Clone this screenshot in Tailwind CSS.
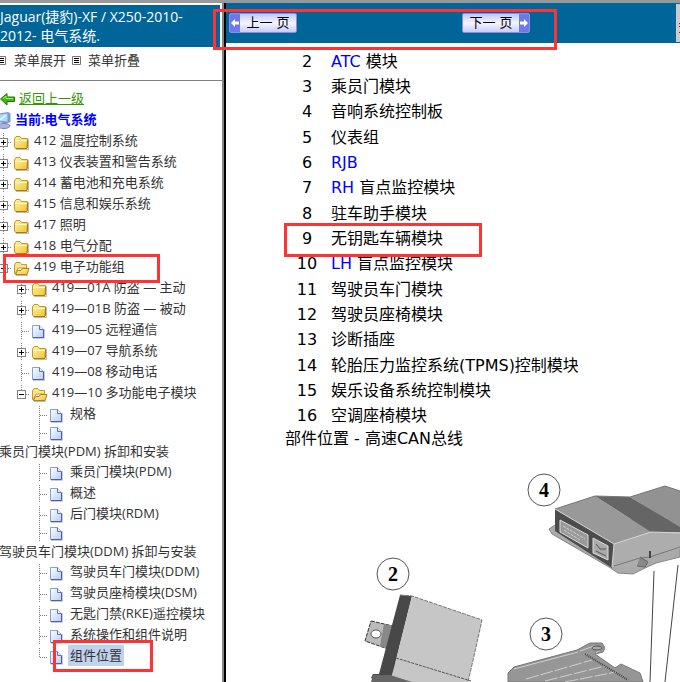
<!DOCTYPE html>
<html lang="zh-CN">
 <head>
  <meta charset="utf-8"/>
  <meta content="width=device-width, initial-scale=1.0" name="viewport"/>
  <title>
    Jaguar(捷豹)-XF 电气系统
  </title>
  <script src="https://cdn.jsdelivr.net/npm/@tailwindcss/browser@4"></script>
 </head>
 <body class="relative flex min-h-screen flex-col overflow-x-hidden bg-white font-['Open_Sans','Noto_Sans_CJK_SC',sans-serif] text-[13px] text-[#333]">
  <!-- Shared tree icons -->
  <svg class="absolute size-0" aria-hidden="true">
   <defs>
    <linearGradient id="gold" x1="0" y1="0" x2="1" y2="1"><stop offset="0" stop-color="#fff3a8"/><stop offset="1" stop-color="#f0c430"/></linearGradient>
    <linearGradient id="sheet" x1="0" y1="0" x2="1" y2="1"><stop offset="0" stop-color="#ffffff"/><stop offset="1" stop-color="#b4cdf5"/></linearGradient>
   </defs>
   <symbol id="plus" viewBox="0 0 18 18">
    <path d="M9.500 0V18M14 9.500H18" fill="none" stroke="#808080" stroke-dasharray="1 1"/>
    <rect x="5.500" y="5.500" width="8" height="8" fill="#fff" stroke="#848484"/>
    <path d="M7 9.500H12M9.500 7V12" stroke="#000"/>
   </symbol>
   <symbol id="minus" viewBox="0 0 18 18">
    <path d="M9.500 0V5M14 9.500H18" fill="none" stroke="#808080" stroke-dasharray="1 1"/>
    <rect x="5.500" y="5.500" width="8" height="8" fill="#fff" stroke="#848484"/>
    <path d="M7 9.500H12" stroke="#000"/>
   </symbol>
   <symbol id="join" viewBox="0 0 18 18">
    <path d="M9.500 0V18M10 9.500H18" fill="none" stroke="#808080" stroke-dasharray="1 1"/>
   </symbol>
   <symbol id="joinend" viewBox="0 0 18 18">
    <path d="M9.500 0V10M10 9.500H18" fill="none" stroke="#808080" stroke-dasharray="1 1"/>
   </symbol>
   <symbol id="folder" viewBox="0 0 18 18">
    <path d="M4 16.500H16.500V6" fill="none" stroke="#bbb"/>
    <path d="M2.500 14V6L4 3.500H8L9.500 5.500H15.500V14.500L14.500 15.500H4Z" fill="url(#gold)" stroke="#c49a2c"/>
    <path d="M3 7.500H15" stroke="#fffbd8"/>
    <path d="M3.500 15.500H15L15.500 7" fill="none" stroke="#a87b10"/>
   </symbol>
   <symbol id="open" viewBox="0 0 18 18">
    <path d="M4 16.500H16" stroke="#bbb"/>
    <path d="M2.500 14V6L4 3.500H8L9.500 5.500H14.500V9H6L3 15Z" fill="#f8e68c" stroke="#c49a2c"/>
    <path d="M3.500 15.500L5.500 11.500H9L10.500 9.500H17L15 15.500Z" fill="url(#gold)" stroke="#b08418"/>
   </symbol>
   <symbol id="doc" viewBox="0 0 18 18">
    <path d="M3 16.500H14.500V7" fill="none" stroke="#ccc"/>
    <path d="M2.500 3.500H9.500L13.500 7.500V15.500H2.500Z" fill="url(#sheet)" stroke="#8a9fd0"/>
    <path d="M9.500 3.500V7.500H13.500" fill="#e8f0ff" stroke="#5872b5"/>
    <path d="M13.500 8V15.500H3" fill="none" stroke="#4a60a8"/>
   </symbol>
   <symbol id="lines" viewBox="0 0 10 10">
    <path d="M.5.5H8.500V8.500H.5Z" fill="#fff" stroke="#777"/>
    <path d="M2 2.500H7M2 4.500H7M2 6.500H7" stroke="#000"/>
   </symbol>
  </svg>

  <div class="h-[3px] bg-[#999]"></div>
  <div class="flex flex-1">
   <aside class="w-[224px] shrink-0 overflow-hidden border-r-2 border-[#848484] whitespace-nowrap">
    <h1 class="mt-[2px] mr-[2px] h-[42px] bg-[#006699] pt-[2px] text-sm leading-[19px] text-white">
     Jaguar(捷豹)-XF / X250-2010-<br/>2012- 电气系统.
    </h1>
    <div class="flex h-[34px] items-center border-b border-[#808080] pb-[6px]">
     <button class="flex items-center">
      <svg class="-ml-[3px] mr-[7px] size-[10px]"><use href="#lines"/></svg>菜单展开
     </button>
     <button class="flex items-center">
      <svg class="mx-[6px] size-[10px]"><use href="#lines"/></svg>菜单折叠
     </button>
    </div>
    <div class="mt-[8px] flex h-[20px] items-center">
     <svg class="mr-[4px] h-[14px] w-[15px]" viewBox="0 0 15 14">
      <path d="M.5 7L7 1.500V5H14.500V9.500H7V13Z" fill="#3db814" stroke="#1d7408"/>
      <path d="M3 6.500L6 4V6.500H13" fill="none" stroke="#a8ec78"/>
     </svg>
     <a class="text-[#339900] underline" href="#">返回上一级</a>
    </div>
    <div class="flex h-[21px] items-center">
     <svg class="mr-[4px] h-[18px] w-[11px]" viewBox="0 0 11 18">
      <path d="M-4 3L8 1L10.500 2.500V11L7 12.500L-4 11Z" fill="#7f9ad0"/>
      <path d="M-4 4L7.500 2.500V10.500L-4 9.500Z" fill="#9fdcff"/>
      <path d="M0 9L6 4" stroke="#dff5ff" stroke-width="2"/>
      <ellipse cx="4" cy="15" rx="6" ry="2.500" fill="#b0b4dc" stroke="#7c80b0"/>
     </svg>
     <span class="font-semibold text-[#0000ff]">当前:电气系统</span>
    </div>

    <nav class="-ml-[6px] leading-[21px]">
     <ul>
      <li class="flex h-[21px] items-end"><button aria-label="展开 412"><svg class="size-[18px]"><use href="#plus"/></svg></button><svg class="mr-[4px] size-[18px]"><use href="#folder"/></svg><a href="#">412 温度控制系统</a></li>
      <li class="flex h-[21px] items-end"><button aria-label="展开 413"><svg class="size-[18px]"><use href="#plus"/></svg></button><svg class="mr-[4px] size-[18px]"><use href="#folder"/></svg><a href="#">413 仪表装置和警告系统</a></li>
      <li class="flex h-[21px] items-end"><button aria-label="展开 414"><svg class="size-[18px]"><use href="#plus"/></svg></button><svg class="mr-[4px] size-[18px]"><use href="#folder"/></svg><a href="#">414 蓄电池和充电系统</a></li>
      <li class="flex h-[21px] items-end"><button aria-label="展开 415"><svg class="size-[18px]"><use href="#plus"/></svg></button><svg class="mr-[4px] size-[18px]"><use href="#folder"/></svg><a href="#">415 信息和娱乐系统</a></li>
      <li class="flex h-[21px] items-end"><button aria-label="展开 417"><svg class="size-[18px]"><use href="#plus"/></svg></button><svg class="mr-[4px] size-[18px]"><use href="#folder"/></svg><a href="#">417 照明</a></li>
      <li class="flex h-[21px] items-end"><button aria-label="展开 418"><svg class="size-[18px]"><use href="#plus"/></svg></button><svg class="mr-[4px] size-[18px]"><use href="#folder"/></svg><a href="#">418 电气分配</a></li>
      <li>
       <div class="flex h-[21px] items-end"><button aria-label="折叠 419"><svg class="size-[18px]"><use href="#minus"/></svg></button><svg class="mr-[4px] size-[18px]"><use href="#open"/></svg><a href="#">419 电子功能组</a></div>
       <ul>
        <li class="flex h-[21px] items-end pl-[18px]"><button aria-label="展开 419-01A"><svg class="size-[18px]"><use href="#plus"/></svg></button><svg class="mr-[4px] size-[18px]"><use href="#folder"/></svg><a href="#">419—01A 防盗 — 主动</a></li>
        <li class="flex h-[21px] items-end pl-[18px]"><button aria-label="展开 419-01B"><svg class="size-[18px]"><use href="#plus"/></svg></button><svg class="mr-[4px] size-[18px]"><use href="#folder"/></svg><a href="#">419—01B 防盗 — 被动</a></li>
        <li class="flex h-[21px] items-end pl-[18px]"><svg class="size-[18px]"><use href="#join"/></svg><svg class="mr-[4px] size-[18px]"><use href="#doc"/></svg><a href="#">419—05 远程通信</a></li>
        <li class="flex h-[21px] items-end pl-[18px]"><button aria-label="展开 419-07"><svg class="size-[18px]"><use href="#plus"/></svg></button><svg class="mr-[4px] size-[18px]"><use href="#folder"/></svg><a href="#">419—07 导航系统</a></li>
        <li class="flex h-[21px] items-end pl-[18px]"><svg class="size-[18px]"><use href="#join"/></svg><svg class="mr-[4px] size-[18px]"><use href="#doc"/></svg><a href="#">419—08 移动电话</a></li>
        <li>
         <div class="flex h-[21px] items-end pl-[18px]"><button aria-label="折叠 419-10"><svg class="size-[18px]"><use href="#minus"/></svg></button><svg class="mr-[4px] size-[18px]"><use href="#open"/></svg><a href="#">419—10 多功能电子模块</a></div>
         <ul>
          <li class="flex h-[21px] items-end pl-[36px]"><svg class="size-[18px]"><use href="#join"/></svg><svg class="mr-[4px] size-[18px]"><use href="#doc"/></svg><a href="#">规格</a></li>
          <li>
           <div class="flex pl-[36px]"><svg class="size-[18px]"><use href="#join"/></svg><svg class="size-[18px]"><use href="#doc"/></svg></div>
           <a class="block pl-[5px] leading-[19px]" href="#">乘员门模块(PDM) 拆卸和安装</a>
          </li>
          <li class="flex h-[21px] items-end pl-[36px]"><svg class="size-[18px]"><use href="#join"/></svg><svg class="mr-[4px] size-[18px]"><use href="#doc"/></svg><a href="#">乘员门模块(PDM)</a></li>
          <li class="flex h-[21px] items-end pl-[36px]"><svg class="size-[18px]"><use href="#join"/></svg><svg class="mr-[4px] size-[18px]"><use href="#doc"/></svg><a href="#">概述</a></li>
          <li class="flex h-[21px] items-end pl-[36px]"><svg class="size-[18px]"><use href="#join"/></svg><svg class="mr-[4px] size-[18px]"><use href="#doc"/></svg><a href="#">后门模块(RDM)</a></li>
          <li>
           <div class="flex pl-[36px]"><svg class="size-[18px]"><use href="#join"/></svg><svg class="size-[18px]"><use href="#doc"/></svg></div>
           <a class="block pl-[5px] leading-[19px]" href="#">驾驶员车门模块(DDM) 拆卸与安装</a>
          </li>
          <li class="flex h-[21px] items-end pl-[36px]"><svg class="size-[18px]"><use href="#join"/></svg><svg class="mr-[4px] size-[18px]"><use href="#doc"/></svg><a href="#">驾驶员车门模块(DDM)</a></li>
          <li class="flex h-[21px] items-end pl-[36px]"><svg class="size-[18px]"><use href="#join"/></svg><svg class="mr-[4px] size-[18px]"><use href="#doc"/></svg><a href="#">驾驶员座椅模块(DSM)</a></li>
          <li class="flex h-[21px] items-end pl-[36px]"><svg class="size-[18px]"><use href="#join"/></svg><svg class="mr-[4px] size-[18px]"><use href="#doc"/></svg><a href="#">无匙门禁(RKE)遥控模块</a></li>
          <li class="flex h-[21px] items-end pl-[36px]"><svg class="size-[18px]"><use href="#join"/></svg><svg class="mr-[4px] size-[18px]"><use href="#doc"/></svg><a href="#">系统操作和组件说明</a></li>
          <li class="flex h-[21px] items-end pl-[36px]"><svg class="size-[18px]"><use href="#joinend"/></svg><svg class="mr-[2px] size-[18px]"><use href="#doc"/></svg><a class="bg-[#c1d2ee] px-[2px]" href="#">组件位置</a></li>
         </ul>
        </li>
       </ul>
      </li>
     </ul>
    </nav>
   </aside>

   <main class="min-w-0 flex-1 overflow-hidden border-l-2 border-black font-['DejaVu_Sans','Noto_Sans_CJK_SC',sans-serif] text-base text-black">
    <header class="flex h-[40px] items-center bg-[#006699] pl-[3px] text-[13px]">
     <button class="flex h-[20px] w-[68px] overflow-hidden rounded-xs border border-[#8a8fe0] bg-linear-to-b from-[#c4c8fa] via-[#f4f5ff] to-[#c8ccfa]">
      <svg class="h-[18px] w-[10px] bg-[#6f78e8]" viewBox="0 0 10 18"><path d="M1 9L5 5V7.500H9V10.500H5V13Z" fill="#fff"/></svg>
      <span class="flex-1 text-center leading-[18px]">上一 页</span>
     </button>
     <button class="ml-[165px] flex h-[20px] w-[68px] overflow-hidden rounded-xs border border-[#8a8fe0] bg-linear-to-b from-[#c4c8fa] via-[#f4f5ff] to-[#c8ccfa]">
      <span class="flex-1 text-center leading-[18px]">下一 页</span>
      <svg class="h-[18px] w-[10px] bg-[#6f78e8]" viewBox="0 0 10 18"><path d="M9 9L5 5V7.500H1V10.500H5V13Z" fill="#fff"/></svg>
     </button>
     <svg class="ml-auto h-[38px] w-[4px] bg-[#ccc]" viewBox="0 0 4 38"><path d="M3 19.500H4M3 22.500H4M3 28.500H4" stroke="#d00"/></svg>
    </header>

    <table class="mt-[6px] ml-[59px] h-[380px] border-collapse leading-[22px] whitespace-nowrap">
     <tbody>
      <tr><td class="w-[44px] p-0 text-center">2</td><td class="py-0 pr-0 pl-[2px]"><a class="text-[#0000ff]" href="#">ATC</a> 模块</td></tr>
      <tr><td class="w-[44px] p-0 text-center">3</td><td class="py-0 pr-0 pl-[2px]">乘员门模块</td></tr>
      <tr><td class="w-[44px] p-0 text-center">4</td><td class="py-0 pr-0 pl-[2px]">音响系统控制板</td></tr>
      <tr><td class="w-[44px] p-0 text-center">5</td><td class="py-0 pr-0 pl-[2px]">仪表组</td></tr>
      <tr><td class="w-[44px] p-0 text-center">6</td><td class="py-0 pr-0 pl-[2px]"><a class="text-[#0000ff]" href="#">RJB</a></td></tr>
      <tr><td class="w-[44px] p-0 text-center">7</td><td class="py-0 pr-0 pl-[2px]"><a class="text-[#0000ff]" href="#">RH</a> 盲点监控模块</td></tr>
      <tr><td class="w-[44px] p-0 text-center">8</td><td class="py-0 pr-0 pl-[2px]">驻车助手模块</td></tr>
      <tr><td class="w-[44px] p-0 text-center">9</td><td class="py-0 pr-0 pl-[2px]">无钥匙车辆模块</td></tr>
      <tr><td class="w-[44px] p-0 text-center">10</td><td class="py-0 pr-0 pl-[2px]"><a class="text-[#0000ff]" href="#">LH</a> 盲点监控模块</td></tr>
      <tr><td class="w-[44px] p-0 text-center">11</td><td class="py-0 pr-0 pl-[2px]">驾驶员车门模块</td></tr>
      <tr><td class="w-[44px] p-0 text-center">12</td><td class="py-0 pr-0 pl-[2px]">驾驶员座椅模块</td></tr>
      <tr><td class="w-[44px] p-0 text-center">13</td><td class="py-0 pr-0 pl-[2px]">诊断插座</td></tr>
      <tr><td class="w-[44px] p-0 text-center">14</td><td class="py-0 pr-0 pl-[2px]">轮胎压力监控系统(TPMS)控制模块</td></tr>
      <tr><td class="w-[44px] p-0 text-center">15</td><td class="py-0 pr-0 pl-[2px]">娱乐设备系统控制模块</td></tr>
      <tr><td class="w-[44px] p-0 text-center">16</td><td class="py-0 pr-0 pl-[2px]">空调座椅模块</td></tr>
     </tbody>
    </table>
    <p class="ml-[59px] leading-[20px]">部件位置 - 高速CAN总线</p>

    <!-- Module drawing -->
    <svg class="block w-full" viewBox="226 449 454 233" font-family="Liberation Serif, serif" font-size="20" font-weight="bold" text-anchor="middle">
     <!-- module 4 -->
     <path d="M555 525L549 529L552 534L609 567L618 573L633 574L645 568L656 563L680 557V520H560Z" fill="#aaa" stroke="#888"/>
     <path d="M555 509L595 496L651 532L614 544Z" fill="#999"/>
     <path d="M595 496L630 497L680 526V532L651 532Z" fill="#656565"/>
     <path d="M630 497L665 486L680 491V527Z" fill="#929292"/>
     <path d="M614 544L651 532L680 533V549L645 558L638 566L618 567L612 566Z" fill="#adadad"/>
     <path d="M614 566L640 558L650 557L680 547" fill="none" stroke="#777"/>
     <path d="M650 551V558" stroke="#444" stroke-width="2"/>
     <path d="M640 557L648 562L645 567L637 566" fill="#888" stroke="#666"/>
     <path d="M555 509L614 544L612 568L555 531Z" fill="#4c4c4c"/>
     <path d="M560 520L588 535V548L560 532Z" fill="#999" stroke="#ddd"/>
     <path d="M563 526L585 539M564 530L580 540" stroke="#d0d0d0" stroke-dasharray="3 1"/>
     <path d="M593 538L608 546V560L593 553Z" fill="#aaa" stroke="#ddd"/>
     <path d="M596 544L600 549L606 549M596 551L606 556" fill="none" stroke="#555"/>
     <path d="M555 509L614 544L651 532L680 533M614 544L612 567" fill="none" stroke="#d6d6d6"/>
     <path d="M555 509L595 496L630 497L665 486L680 491" fill="none" stroke="#777"/>
     <path d="M654 571L650 682M678 565L665 682" stroke="#444"/>
     <!-- module 2 -->
     <path d="M371 621L393 626L388 649L365 641Z" fill="#bbb" stroke="#333" stroke-dasharray="4 1"/>
     <path d="M384 624L393 626L388 649L380 646Z" fill="#888"/>
     <ellipse cx="376" cy="634" rx="5" ry="4" fill="#fff" stroke="#555"/>
     <path d="M400 595L412 596L396 660L392 682H380L371 678L373 674H379Z" fill="#484848"/>
     <path d="M412 596L482 620L474 656L468 682H390L396 660Z" fill="#c6c6c6"/>
     <path d="M400 595L412 596L482 620L474 656L468 682" fill="none" stroke="#777" stroke-dasharray="4 1"/>
     <path d="M396 658L471 681" stroke="#555" stroke-dasharray="3 1"/>
     <path d="M371 682L373 675H390L412 682Z" fill="#666"/>
     <!-- module 3 -->
     <path d="M508 673L514 667L577 650L590 643L602 643L605 648L603 652L595 654L615 668L621 664L640 673L643 682H508Z" fill="#969696" stroke="#777"/>
     <path d="M514 669L578 652M580 651L594 646L602 648L596 653" fill="none" stroke="#d0d0d0"/>
     <ellipse cx="597" cy="648" rx="5" ry="2" fill="#aaa" stroke="#555"/>
     <path d="M526 679L592 660M545 681L605 666M565 682L616 672" stroke="#d0d0d0" stroke-dasharray="13 2"/>
     <path d="M585 654L628 680" stroke="#444" stroke-width="2" stroke-dasharray="1 1"/>
     <!-- callouts -->
     <g fill="#fff" stroke="#555">
      <circle cx="544" cy="490" r="16"/>
      <circle cx="546" cy="634" r="16"/>
      <circle cx="393" cy="574" r="16"/>
     </g>
     <text x="544" y="497">4</text>
     <text x="546" y="641">3</text>
     <text x="393" y="581">2</text>
    </svg>
   </main>
  </div>

  <!-- Red marker boxes -->
  <div class="pointer-events-none absolute top-[9px] left-[213px] h-[41px] w-[344px] border-3 border-[#ff3333]"></div>
  <div class="pointer-events-none absolute top-[223px] left-[284px] h-[34px] w-[198px] border-3 border-[#ff3333]"></div>
  <div class="pointer-events-none absolute top-[254px] left-[3px] h-[29px] w-[157px] border-3 border-[#ff3333]"></div>
  <div class="pointer-events-none absolute top-[640px] left-[53px] h-[32px] w-[100px] border-3 border-[#ff3333]"></div>
 </body>
</html>
